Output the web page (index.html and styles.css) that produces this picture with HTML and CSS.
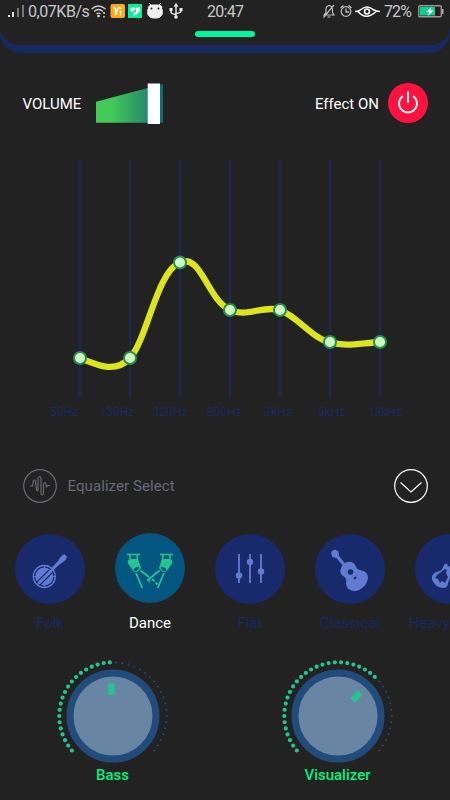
FILE: index.html
```html
<!DOCTYPE html>
<html lang="en">
<head>
<meta charset="utf-8">
<title>Equalizer</title>
<link rel="stylesheet" href="styles.css">
</head>
<body>
<main class="app">
  <header class="top">
    <div class="top-inner">
      <div class="status">
        <svg class="status-left" width="14" height="23" viewBox="0 0 14 23"><path d="M1.500 17v-2M5.500 17v-5" stroke="#ddd" stroke-width="2"/><path d="M10.500 17V8M15.500 17V5" stroke="#777" stroke-width="2"/></svg>
        <span class="speed">0,07KB/s</span>
        <svg class="status-icons" width="92" height="23" viewBox="91 0 92 23">
          <g fill="none" stroke="#ccc" stroke-width="1.300"><path d="M91.500 9q7-6 14 0M94 11.500q4.500-4 9 0M96.500 14q2-1.800 4 0"/></g>
          <circle cx="98.500" cy="16" r="1.300" fill="#ddd"/><path d="M104 12v2m0 2v1.500" stroke="#ddd" stroke-width="1.500" fill="none"/>
          <rect x="110.500" y="4" width="14.500" height="14" rx="2" fill="#fba919"/><path d="M114 7l2 3v5m3-8-4 8M120.500 7v2m0 1.500v5" stroke="#fff" stroke-width="1.500" fill="none"/>
          <path d="M128 4h14v14h-14z" fill="#00f39a"/><path d="M130 9l3-2 3 1-2 3-3 1zM136 8l4-1v4l-3 3-3 2-1-3 3-1z" fill="#fff"/>
          <path d="M148 9h14q2 8-5 9h-4q-7-1-5-9zM148 8q1-3 4-3h6q4 0 4 3l-2 2h-10zM149 3l3 3M161 3l-3 3" fill="#eee" stroke="#eee" stroke-width="1"/><circle cx="151.500" cy="8.500" r="1" fill="#222"/><circle cx="158.500" cy="8.500" r="1" fill="#222"/>
          <path d="M176 5v12M171 9v3q0 2 5 2.500M181 8v3q0 2-5 2.500" stroke="#eee" stroke-width="1.400" fill="none"/><path d="M176 3l2.500 3.500h-5zM169.500 8h3v3h-3zM179.500 8h3v3h-3z" fill="#eee"/><circle cx="176" cy="17" r="1.800" fill="#eee"/>
        </svg>
        <span class="clock">20:47</span>
        <svg class="status-right" width="60" height="23" viewBox="322 0 60 23">
          <path d="M324 15h10l-1.500-2.500V9q-.5-3-3.500-3.500Q326 6 326 9v3.500zM327.500 17h3M323.500 17.500 334 5" fill="none" stroke="#bbb" stroke-width="1.200"/>
          <g fill="none" stroke="#bbb" stroke-width="1.300"><circle cx="346" cy="11.500" r="4.800"/><path d="M346 8.500v3.500h3M340.500 8l3-2.500M351.500 8l-3-2.500"/></g>
          <g fill="none" stroke="#fff" stroke-width="1.600"><path d="M355 11.500q4 0 6-2 6-5 12 0 3 2 7 2M358 11.500q8 9.500 18 0"/><circle cx="367" cy="11.500" r="2.500"/></g>
        </svg>
        <span class="percent">72%</span>
        <svg class="battery" width="26" height="13" viewBox="0 0 26 13"><rect x=".8" y=".8" width="22.500" height="11" rx="1" fill="#2d1820" stroke="#999" stroke-width="1.400"/><path d="M2 2h15v8.500H2z" fill="#00d58b"/><path d="M24 4h1.500v5H24z" fill="#aaa"/><path d="M13.500 2 8 7h3l-1 4 5.500-5.500h-3z" fill="#fff"/></svg>
      </div>
      <div class="handle"></div>
    </div>
  </header>

  <section class="controls">
    <span class="control-name">VOLUME</span>
    <svg class="volume" width="68" height="42" viewBox="0 0 68 42">
      <defs><linearGradient id="vol"><stop offset="0" stop-color="#42cb56"/><stop offset=".22" stop-color="#42cb56"/><stop offset=".82" stop-color="#24836c"/><stop offset="1" stop-color="#086b72"/></linearGradient></defs>
      <path d="M0 18.700 67 1v38.800H0z" fill="url(#vol)"/><path d="M51.700.5H64V41H51.700z" fill="#fff"/>
    </svg>
    <span class="effect">Effect ON</span>
    <span class="power"><svg width="40" height="40" viewBox="0 0 40 40" fill="none" stroke="#fff" stroke-width="1.900"><path d="M14.900 13A9 9 0 1 0 25.100 13M20 8.500V20"/></svg></span>
  </section>

  <svg class="chart" width="450" height="275" viewBox="0 150 450 275">
    <path class="grid" d="M80 160V398M130 160V398M180 160V398M230 160V398M280 160V398M330 160V398M380 160V398"/>
    <path class="curve" d="M80 358C97 365 115 374 130 358C147 340 157 271 180 262.500C201 253 207 299 230 310C247 318 262 305 280 310C297 316 314 340 330 342C345 347 358 343.500 380 342"/>
    <g class="points"><circle cx="80" cy="358" r="6"/><circle cx="130" cy="358" r="6"/><circle cx="180" cy="262.500" r="6"/><circle cx="230" cy="310" r="6"/><circle cx="280" cy="310" r="6"/><circle cx="330" cy="342" r="6"/><circle cx="380" cy="342" r="6"/></g>
    <g class="freq"><text x="50" y="416" textLength="28">50Hz</text><text x="99.500" y="416" textLength="35">130Hz</text><text x="152.500" y="416" textLength="35">320Hz</text><text x="206.500" y="416" textLength="35">800Hz</text><text x="264" y="416" textLength="28">2kHz</text><text x="317.500" y="416" textLength="28">5kHz</text><text x="368" y="416" textLength="34">13kHz</text></g>
  </svg>

  <section class="select">
    <svg width="34" height="34" viewBox="0 0 34 34" fill="none" stroke="#686975" stroke-width="1.200"><circle cx="17" cy="17" r="16.300"/><path d="M7 17h2.500l1-5q1.200-2 2 0l1 9q1 2 1.500 0V9q1.700-3 3 0v16q1.200 2 2.500 0V15q1.500-3 2.500 0l.5 3 1-1.500H27"/></svg>
    <span class="select-name">Equalizer Select</span>
    <svg class="expand" width="34" height="34" viewBox="0 0 34 34" fill="none" stroke="#fff" stroke-width="1.200"><circle cx="17" cy="17" r="16.300"/><path d="M6.500 13.500 17 23l10.500-9.500"/></svg>
  </section>

  <section class="presets">
    <div class="preset"><span class="disc"><svg width="70" height="70" viewBox="15 534 70 70"><circle cx="44.300" cy="576.500" r="11" fill="none" stroke="#617bd1" stroke-width="1.300"/><circle cx="44.300" cy="576.500" r="9" fill="#617bd1"/><path d="M44.300 565v3M44.300 585v3M33 576.500h3M52.500 576.500h3" stroke="#617bd1"/><path d="M36.500 582.500 49 570M39.500 585.500 52 573" stroke="#182a6b" stroke-width="1.100"/><path d="M38 584 60 562" stroke="#617bd1" stroke-width="2.200"/><path d="M51 568.500 58 561l2.500-4 3.500-3 3 2.500-1 3-3.500 3-4 2.500-5 5z" fill="#617bd1"/></svg></span><span>Folk</span></div>
    <div class="preset selected"><span class="disc"><svg width="70" height="70" viewBox="115 533 70 70"><g id="lamp"><path d="M127 554.500h13M130 554v6M137.300 554v6" stroke="#25c58f" stroke-width="1.600"/><path d="M129.500 559h8.500l3 9q-2 4.500-7 4l-6-8.500q-1-3 1.500-4.500z" fill="#25c58f"/><ellipse cx="136.500" cy="569" rx="3.200" ry="1.800" fill="#035680" transform="rotate(-28 136.500 569)"/></g><use href="#lamp" transform="matrix(-1 0 0 1 300 0)"/><path d="M136 573l6.300 15M140.500 570.500l8.500 6.500M152 579l2.500 2M155.500 582.500l2 2M164 573l-6.300 15M159.500 570.500l-11.500 9.500 2 1.500" fill="none" stroke="#25c58f" stroke-width="1.800"/></svg></span><span>Dance</span></div>
    <div class="preset"><span class="disc"><svg width="70" height="70" viewBox="215 534 70 70"><path d="M239 554v29M250 554v29M261 554v29" stroke="#617bd1" stroke-width="1.800"/><g fill="#617bd1"><circle cx="239" cy="575.500" r="3.200"/><circle cx="250" cy="562" r="3.200"/><circle cx="261" cy="571.500" r="3.200"/></g></svg></span><span>Flat</span></div>
    <div class="preset"><span class="disc"><svg width="70" height="70" viewBox="315 534 70 70"><path d="m336 555 10 12" stroke="#617bd1" stroke-width="3.200"/><path d="M331 553l1-2 3-1.500 3.500 2 .5 4-3 2.500-3.500-1z" fill="#617bd1"/><path d="M343 565q3-4 8-3 4 1 5 5 1 2.500 4 3 8 1 8 8-1 7-6 10-5 5-12 2-4-2-4-7 1-4-1.500-6-5-3-4-7 0-3 2.500-5z" fill="#617bd1"/><circle cx="350.500" cy="572" r="2.800" fill="#182a6b"/><path d="m354 579 2-2" stroke="#182a6b" stroke-width="2"/></svg></span><span>Classical</span></div>
    <div class="preset"><span class="disc"><svg width="70" height="70" viewBox="415 534 70 70"><path d="M447 563.500q-3 0-4 4-1 3-5 4-7 2-6 8 3 8 11 8.500 5 0 5-5l2-5 8-9-5-6-5 4zM445 569l2 1-1 3 2 4-3 6-3-2-2 2-2-4-3-1 2-3z" fill="#617bd1" fill-rule="evenodd"/></svg></span><span>Heavy Metal</span></div>
  </section>

  <section class="knobs">
    <div class="knob"><svg width="112" height="106" viewBox="-56 -56 112 106"><path class="dots-off" pathLength="39.010" d="M-41.140 34.520A53.700 53.700 0 1 1 41.140 34.520"/><path class="dots-on" pathLength="19.010" d="M-41.140 34.520A53.700 53.700 0 0 1 -3.120 -53.610"/><circle r="43" class="dial"/><path class="mark" d="M0-32.400V-21.300" transform="rotate(-3.330)"/></svg><span>Bass</span></div>
    <div class="knob"><svg width="112" height="106" viewBox="-56 -56 112 106"><path class="dots-off" pathLength="39.010" d="M-41.140 34.520A53.700 53.700 0 1 1 41.140 34.520"/><path class="dots-on" pathLength="26.010" d="M-41.140 34.520A53.700 53.700 0 0 1 36.850 -39.060"/><circle r="43" class="dial"/><path class="mark" d="M0-32.400V-21.300" transform="rotate(43.330)"/></svg><span>Visualizer</span></div>
  </section>
</main>
</body>
</html>
```
FILE: styles.css
```css
* { box-sizing: border-box; }
body { margin: 0; background: #222; font-family: Roboto, sans-serif; }
svg { display: block; flex: none; }
.app { width: 450px; height: 800px; overflow: hidden; background: #222; display: flex; flex-direction: column; }
.top { height: 52.5px; flex: none; background: linear-gradient(#222 28px, #16285f 28px); border-radius: 0 0 21px 21px; }
.top-inner { height: 45px; background: #222; border-radius: 0 0 19px 19px; }
.status { height: 23px; display: flex; align-items: center; color: #c8c8c8; font-size: 16px; white-space: nowrap; }
.status-left { width: 17px; margin-left: 6px; overflow: visible; }
.speed { width: 61px; margin-left: 5px; letter-spacing: -.45px; }
.status-icons { margin-left: 2px; }
.clock { margin-left: 24px; width: 38px; letter-spacing: -.7px; }
.status-right { margin-left: 77px; }
.percent { margin-left: 2px; width: 28px; letter-spacing: -.9px; }
.battery { margin-left: 6px; }
.handle { width: 60px; height: 5.5px; margin: 8px auto 0; border-radius: 3px; background: #00f79e; }
.controls { height: 97.5px; flex: none; display: flex; align-items: center; padding: 5px 22.5px 0; color: #fff; font-size: 15px; }
.control-name { width: 60px; letter-spacing: 0; }
.volume { margin-left: 13.5px; }
.effect { margin-left: auto; }
.power { margin-left: 8.5px; margin-top: -1px; width: 40px; height: 40px; border-radius: 50%; background: #ff123d; }
.chart { margin: 0; }
.grid { stroke: #1b2a63; stroke-width: 1.7; }
.curve { fill: none; stroke: #dce41e; stroke-width: 6.3; }
.points circle { fill: #cbffc1; stroke: #2e8a50; stroke-width: 2; }
.freq { fill: #182861; font-size: 12px; }
.select { height: 34px; margin: 43.5px 22.5px 0 23px; display: flex; align-items: center; flex: none; color: #686975; font-size: 15px; }
.select-name { margin-left: 10.5px; padding-top: 1px; letter-spacing: .08px; }
.expand { margin-left: auto; }
.presets { display: flex; flex: none; height: 132px; padding-top: 31px; }
.preset { width: 100px; flex: none; display: flex; flex-direction: column; align-items: center; gap: 10px; color: #182861; font-size: 15px; line-height: 18px; white-space: nowrap; }
.disc { width: 70.5px; height: 70.5px; flex: none; border-radius: 50%; background: #182a6b; }
.selected { color: #fff; }
.selected .disc { background: #035680; margin-top: -1px; margin-bottom: 1px; }
.knobs { display: flex; flex: none; margin-top: 25px; }
.knob { width: 225px; display: flex; flex-direction: column; align-items: center; color: #00f47b; font-size: 15px; font-weight: 500; line-height: 18px; }
.dots-off, .dots-on { fill: none; stroke-linecap: round; stroke-dasharray: 0 1; }
.dots-off { stroke: #234a7b; stroke-width: 2; }
.dots-on { stroke: #25c58f; stroke-width: 4.2; }
.dial { fill: #6885a4; stroke: #214b7b; stroke-width: 7; }
.mark { stroke: #25c58f; stroke-width: 6.5; }
```
